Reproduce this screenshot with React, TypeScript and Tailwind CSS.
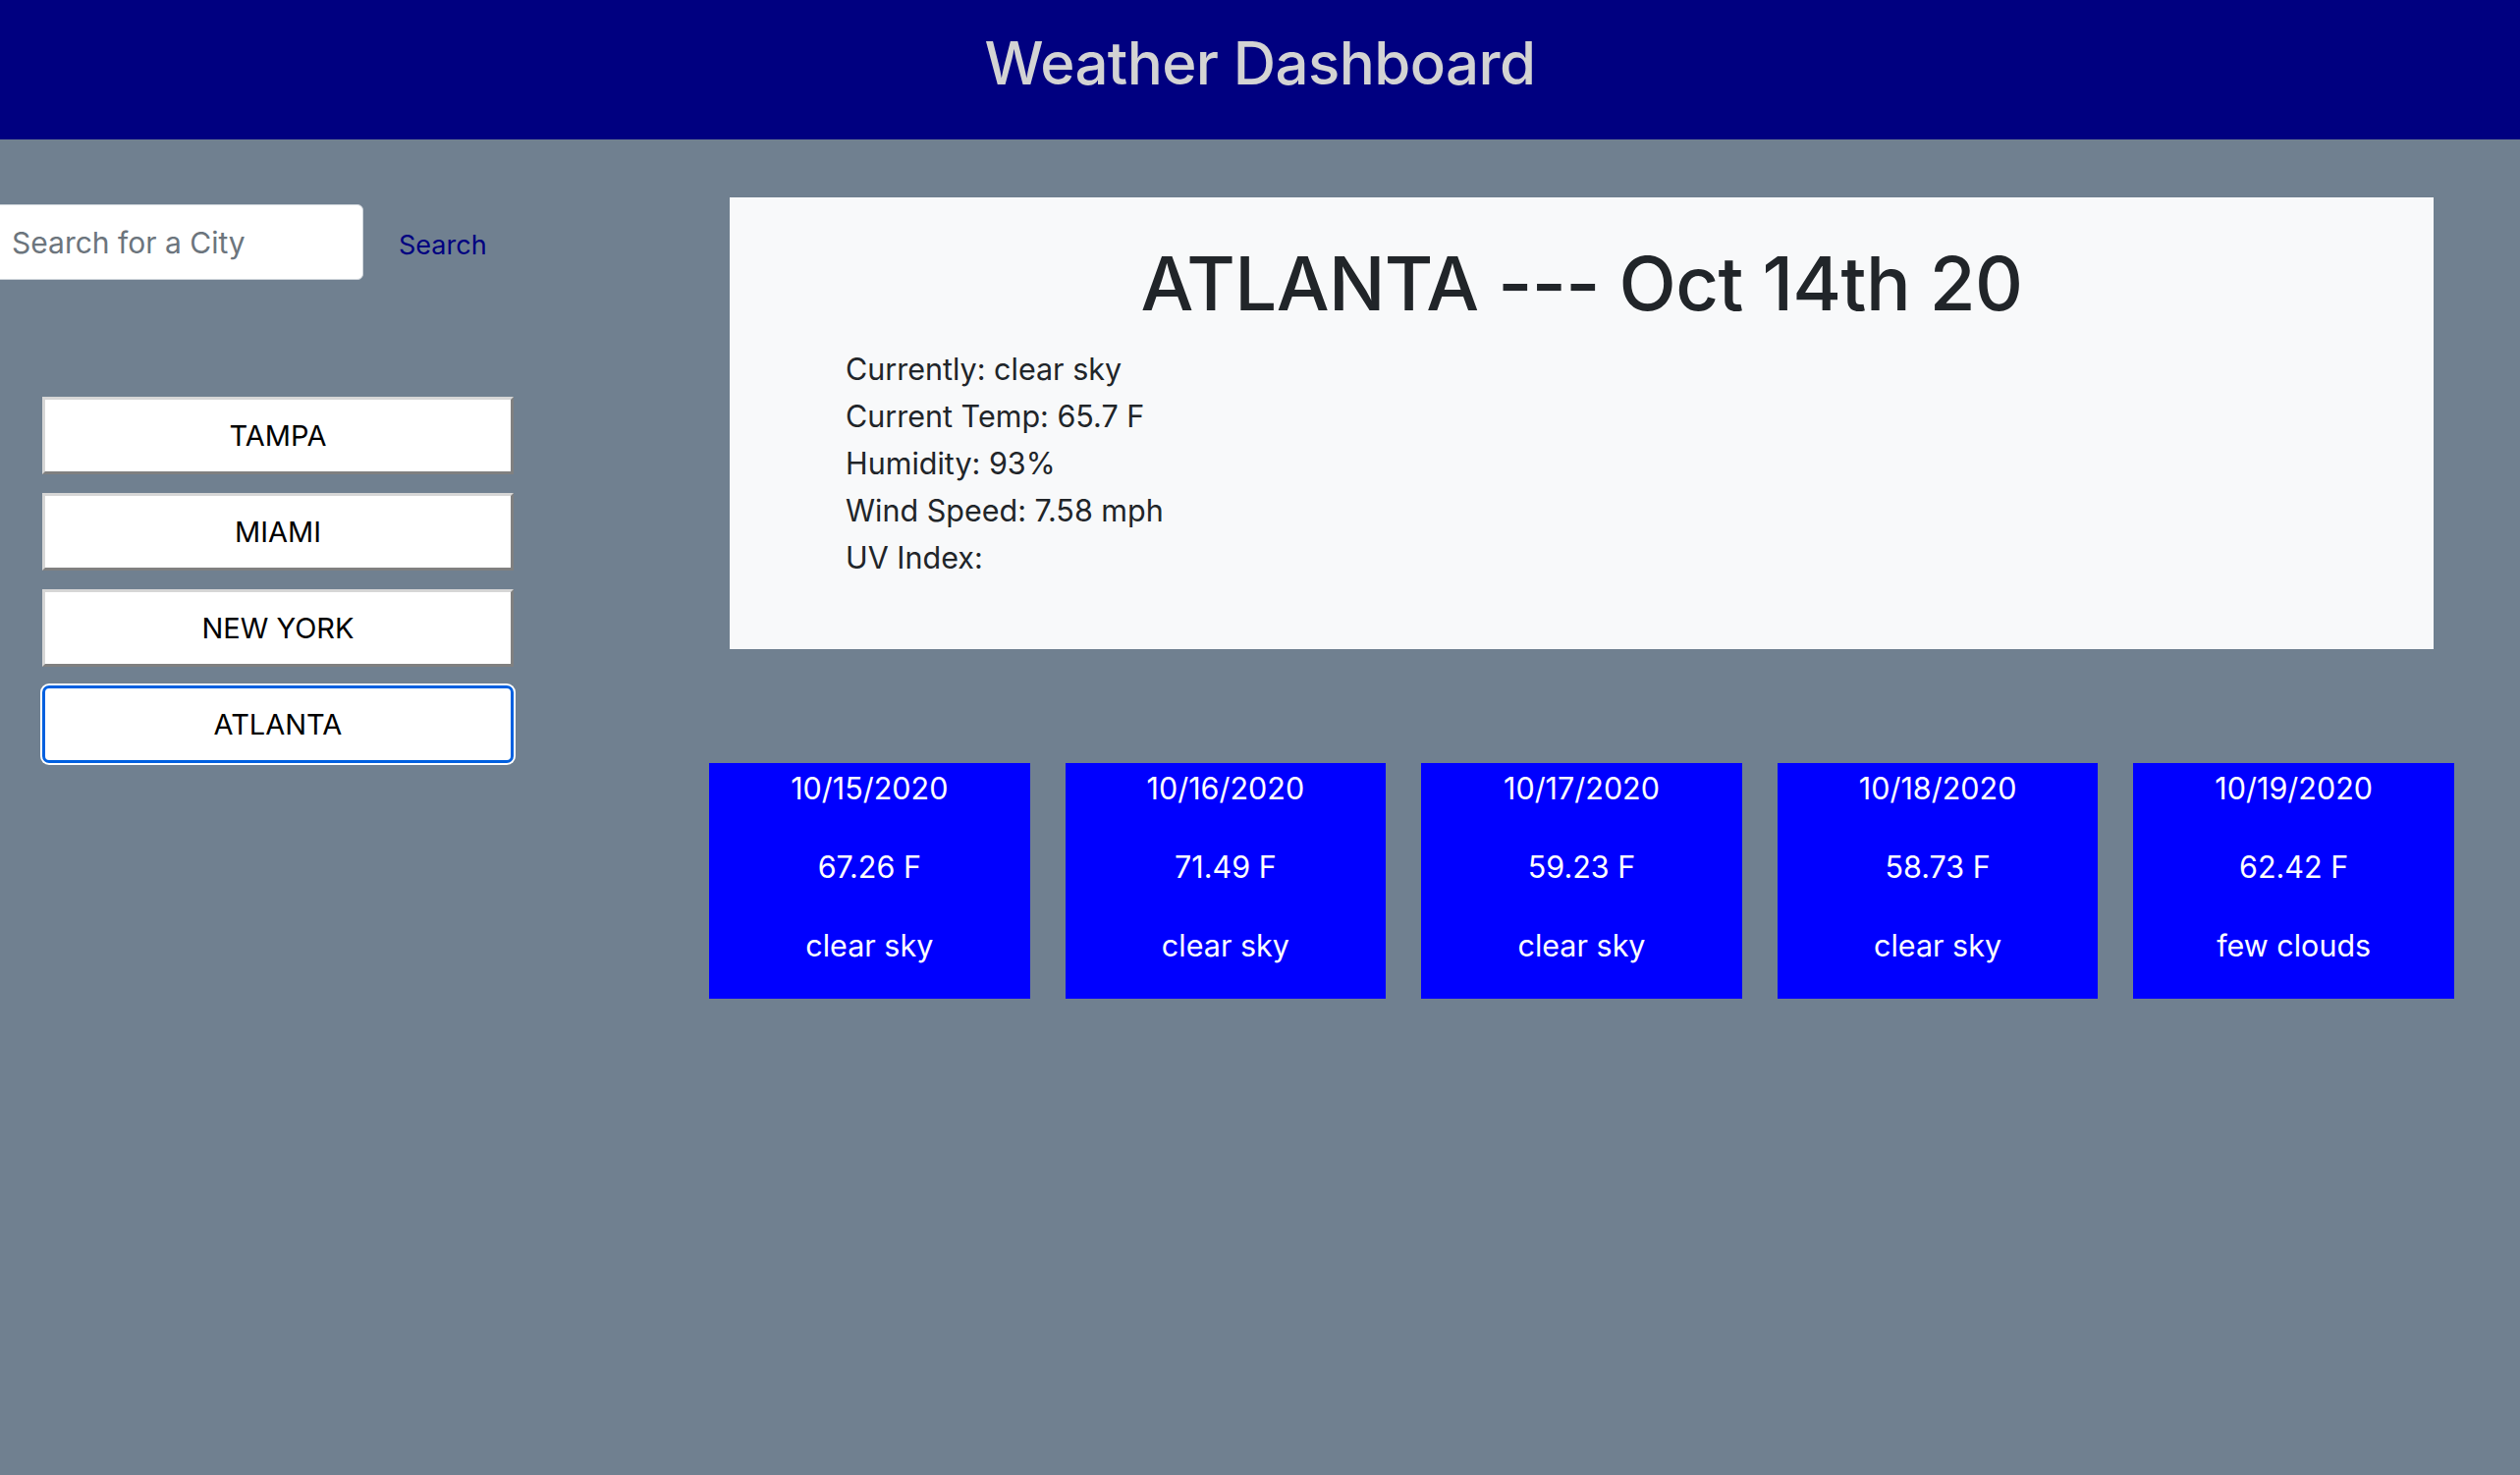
import React from "react";

const cities = ["TAMPA", "MIAMI", "NEW YORK", "ATLANTA"];
const forecast = [
  { date: "10/15/2020", temp: "67.26 F", desc: "clear sky" },
  { date: "10/16/2020", temp: "71.49 F", desc: "clear sky" },
  { date: "10/17/2020", temp: "59.23 F", desc: "clear sky" },
  { date: "10/18/2020", temp: "58.73 F", desc: "clear sky" },
  { date: "10/19/2020", temp: "62.42 F", desc: "few clouds" },
];

export default function App() {
  return (
    <div className="min-h-screen w-full overflow-hidden bg-[#708090] font-['Inter','Liberation_Sans',sans-serif]">
      <header className="h-[142px] bg-[#000080] pt-[28px] text-center">
        <h1 className="text-[60px] font-medium leading-[1.2] text-[#d3d3d3] tracking-[-0.6px]">Weather Dashboard</h1>
      </header>
      <div className="flex">
        <aside className="w-[722px] shrink-0 pt-[66px]">
          <div className="flex items-center">
            <div className="ml-[-9px] flex h-[77px] w-[379px] items-center rounded-[6px] border-[1.6px] border-[#ced4da] bg-white pl-[20px]">
              <input
                placeholder="Search for a City"
                className="w-full bg-transparent text-[30px] leading-none text-[#212529] outline-none placeholder:text-[#6c757d]"
              />
            </div>
            <button className="ml-[36px] mt-[5px] text-[27px] leading-none text-[#000080]">Search</button>
          </div>
          <div className="ml-[43px] mt-[119px] flex w-[480px] flex-col gap-[19px]">
            {cities.map((c) =>
              c === "ATLANTA" ? (
                <button
                  key={c}
                  className="flex h-[79px] w-[480px] items-center justify-center rounded-[7px] border-[3.5px] border-solid border-[#0060df] bg-white text-[29px] text-black shadow-[0_0_0_2px_#ffffff]"
                >
                  {c}
                </button>
              ) : (
                <button
                  key={c}
                  className="flex h-[79px] w-[480px] items-center justify-center border-[3px] border-solid border-t-[#d6d6d6] border-l-[#d6d6d6] border-b-[#808080] border-r-[#808080] bg-white text-[29px] text-black"
                >
                  {c}
                </button>
              )
            )}
          </div>
        </aside>
        <main className="w-[1777px] shrink-0 pt-[59px]">
          <section className="mx-[21px] h-[460px] bg-[#f8f9fa] pt-[42px] text-[#212529]">
            <h2 className="text-center text-[76px] font-medium leading-[1.2] tracking-[-0.6px]">ATLANTA --- Oct 14th 20</h2>
            <div className="mt-[18px] pl-[118px] text-[30.5px] leading-[48px]">
              <p>Currently: clear sky</p>
              <p>Current Temp: 65.7 F</p>
              <p>Humidity: 93%</p>
              <p>Wind Speed: 7.58 mph</p>
              <p>UV Index:</p>
            </div>
          </section>
          <div className="mt-[116px] flex gap-[36px]">
            {forecast.map((f) => (
              <div key={f.date} className="flex h-[240px] w-[327px] flex-col items-center gap-[35px] bg-[#0000ff] pt-[3px] text-[30.5px] leading-[45px] text-white">
                <div>{f.date}</div>
                <div>{f.temp}</div>
                <div>{f.desc}</div>
              </div>
            ))}
          </div>
        </main>
      </div>
    </div>
  );
}
